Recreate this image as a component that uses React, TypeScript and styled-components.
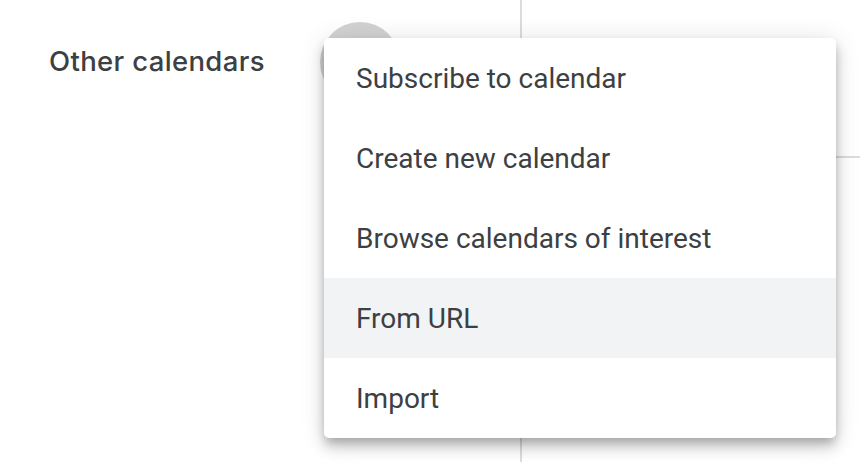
import React from "react";
import styled, { createGlobalStyle } from "styled-components";

const Global = createGlobalStyle`
  html, body { margin: 0; padding: 0; background: #ffffff; }
  body { overflow: hidden; font-family: Roboto, "Liberation Sans", Arial, sans-serif; }
`;

const Page = styled.div`
  position: relative;
  display: flex;
  width: 860px;
  height: 462px;
  overflow: hidden;
  background: #ffffff;
`;

const Sidebar = styled.aside`
  width: 520px;
  flex: 0 0 520px;
  padding-top: 22px;
  box-sizing: border-box;
`;

const SectionHeader = styled.div`
  display: flex;
  align-items: center;
  height: 80px;
  padding-left: 49px;
`;

const SectionTitle = styled.h2`
  margin: 0;
  width: 271px;
  font-family: Inter, "Open Sans", sans-serif;
  font-weight: 500;
  font-size: 27.5px;
  letter-spacing: 0.35px;
  color: #3c4043;
  line-height: 1;
  padding-bottom: 0;
`;

const AddButton = styled.button`
  width: 80px;
  height: 80px;
  border: none;
  border-radius: 50%;
  padding: 0;
  background: #d2d2d2;
`;

const Grid = styled.main`
  flex: 1;
  border-left: 2px solid #dadce0;
`;

const GridCell = styled.div`
  height: 156px;
  border-bottom: 2px solid #dadce0;
`;

const Menu = styled.ul`
  position: absolute;
  left: 324px;
  top: 38px;
  width: 512px;
  margin: 0;
  padding: 0;
  list-style: none;
  background: #ffffff;
  border-radius: 5px;
  overflow: hidden;
  box-shadow: 0 10px 14px rgba(0, 0, 0, 0.16), 0 2px 26px rgba(0, 0, 0, 0.12),
    0 5px 10px -2px rgba(0, 0, 0, 0.2);
`;

const MenuItem = styled.li<{ $active?: boolean }>`
  display: flex;
  align-items: center;
  height: 80px;
  padding-left: 32px;
  font-family: Roboto, "Liberation Sans", Arial, sans-serif;
  font-size: 28px;
  color: #3c4043;
  background: ${(p) => (p.$active ? "#f1f3f4" : "transparent")};
`;

const items = [
  "Subscribe to calendar",
  "Create new calendar",
  "Browse calendars of interest",
  "From URL",
  "Import",
];

export default function App() {
  return (
    <Page>
      <Global />
      <Sidebar>
        <SectionHeader>
          <SectionTitle>Other calendars</SectionTitle>
          <AddButton aria-label="Add other calendars" />
        </SectionHeader>
      </Sidebar>
      <Grid>
        <GridCell />
      </Grid>
      <Menu>
        {items.map((t) => (
          <MenuItem key={t} $active={t === "From URL"}>
            {t}
          </MenuItem>
        ))}
      </Menu>
    </Page>
  );
}
